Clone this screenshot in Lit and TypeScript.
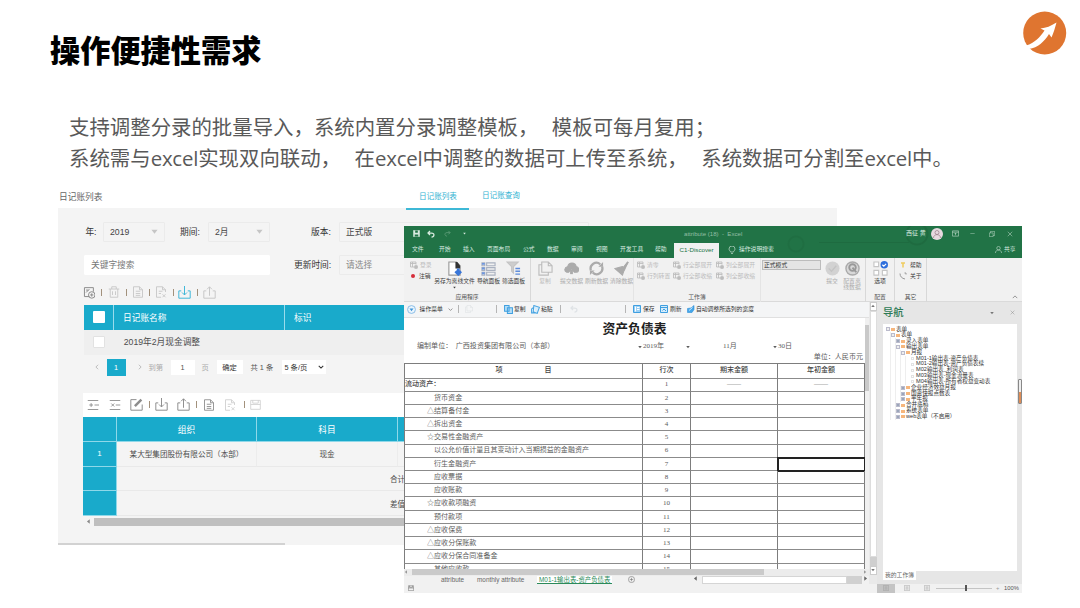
import { LitElement, html, css, svg, nothing } from "lit";
import { customElement } from "lit/decorators.js";

const glyphs: Record<string, any> = {
  addDoc: svg`<path d="M9 13H3V2h11v5M5 5h3M5 8l4-4"/><circle cx="12" cy="11" r="4"/><path d="M12 9v4M10 11h4"/>`,
  trash: svg`<path d="M1 4h14M5 4V1h6v3M3 4v11h10V4M6 7v5M10 7v5"/>`,
  doc: svg`<path d="M2 15V1h8l4 4v10zM10 1v4h4M5 7h6M5 10h6M5 12.500h6"/>`,
  docX: svg`<path d="M14 8V5l-4-4H2v14h6M10 1v4h4M5 7h5M5 10h3M10 11l4 4M14 11l-4 4"/>`,
  download: svg`<path d="M4 6H1v9h14V6h-3M8 0v11M5 8l3 3 3-3"/>`,
  upload: svg`<path d="M4 6H1v9h14V6h-3M8 12V1M5 4l3-3 3 3"/>`,
  insRow: svg`<path d="M1 2h14M1 14h14M3 8h5M5.500 5.500v5M10 8h6"/>`,
  delRow: svg`<path d="M1 2h14M1 14h14M3 6l4 4M7 6l-4 4M9 8h6"/>`,
  edit: svg`<path d="M8 2H1v13h14V8"/><path stroke-width="3" d="M6 10l8-8"/>`,
  save: svg`<path d="M1 2h14v13H1zM4 2v4h8V2M1 8h14"/>`,
  disk: svg`<path fill="currentColor" d="M1 1h14v14H1z"/><path fill="#217346" stroke="none" d="M5 1h6v5H5zM4 10h8v5H4z"/>`,
  undo: svg`<path stroke-width="2.500" d="M2 6h7c7 0 6 8 0 8M6 2L2 6l4 4"/>`,
  redo: svg`<path stroke-width="2" d="M14 6H7c-7 0-6 8 0 8M10 2l4 4-4 4"/>`,
  bulb: svg`<path d="M5 12c0-2-3-3-3-6a6 6 0 0 1 12 0c0 3-3 4-3 6zM6 15h4"/>`,
  person: svg`<circle cx="8" cy="5" r="4"/><path d="M1 16c0-9 14-9 14 0"/>`,
  ribbonOpt: svg`<path d="M1 2h14v12H1zM1 5h14M8 12V7M6 9l2-2 2 2"/>`,
  restore: svg`<path d="M1 5h10v10H1zM4 5V1h11v11h-4"/>`,
  close: svg`<path d="M2 2l12 12M14 2L2 14"/>`,
  minimize: svg`<path d="M1 8h14"/>`,
  saveAs: svg`<path fill="#fff" stroke="#999" d="M2 1h8l4 4v10H2z"/><path fill="#333" stroke="none" d="M9 1h2l3 4v3H9z"/><path stroke="#3976d8" stroke-width="3" d="M12 8v6M9 11l3 3 3-3"/>`,
  navPanel: svg`<path stroke="#a9b1c0" d="M1 2h3v3H1zM1 7h3v3H1zM1 12h3v3H1zM6 2h9v3H6zM6 7h9v3H6zM6 12h9v3H6z"/><path stroke="#6f97de" stroke-width="2" d="M1 3h3M1 8h3M1 13h3"/>`,
  filter: svg`<path fill="#cdcdcd" stroke="#c4c4c4" d="M1 1h12L8 6v7l-2-2V6z"/><path stroke="#5f8ddb" stroke-width="1.500" d="M10 8h5M10 11h5M10 14h5"/>`,
  pages: svg`<path d="M4 1h7l4 4v7H4zM4 4H1v11h10v-3M11 1v4h4"/>`,
  cloud: svg`<path fill="currentColor" d="M3 12c-3-1-3-5 1-6 1-5 8-5 9 0 4 1 3 6 0 6h-2L8 8l-3 4z"/><path stroke-width="3" d="M8 9v5"/>`,
  refresh: svg`<path stroke-width="2.400" d="M2 10A6.200 6.200 0 0 1 12 3.500M14 6A6.200 6.200 0 0 1 4 12.500"/><path fill="currentColor" stroke="none" d="M10 6h5V1zM6 10H1v5z"/>`,
  broom: svg`<path fill="currentColor" d="M15 1L9 8l2 2zM9 6L1 8l8 7 2-6z"/><path stroke-width="2" d="M15 1l-5 7"/>`,
  gridArrow: svg`<path stroke-width="1.700" d="M8 12H1V2h11v5M1 5h11M5 2v10"/><circle cx="12" cy="12" r="3.500" fill="currentColor"/>`,
  disc: svg`<circle cx="8" cy="8" r="7.500" fill="#d2d2d2" stroke="none"/><path stroke="#c4c4c4" stroke-width="1.500" d="M4 8l3 3 5-6"/>`,
  discCfg: svg`<circle cx="8" cy="8" r="7" fill="#d8d8d8" stroke="#aaa" stroke-width="1.500"/><circle cx="8" cy="7" r="3.500" stroke="#999" stroke-width="2"/><path stroke="#999" stroke-width="2" d="M8 7l4 5"/>`,
  options: svg`<path stroke="#c5c5c5" fill="#fff" d="M1 1h5v5H1zM1 10h5v5H1zM10 10h5v5h-5z"/><circle cx="12" cy="4" r="4" fill="#2f6fdc" stroke="none"/><path stroke="#fff" d="M10 4l1.500 1.500L14 3"/>`,
  tip: svg`<path stroke="#f0cb5e" stroke-width="3" d="M4 4h8M8 4v9"/>`,
  about: svg`<path stroke="#999" stroke-width="2" d="M2 3c0 6 4 10 10 11M11 2h3v3"/>`,
  bubble: svg`<circle cx="8" cy="8" r="7" stroke="#7bb4e4" stroke-width="1.500" fill="#eaf5fd"/><path fill="#3d93d8" stroke="none" d="M8 11L4.500 6h7z"/>`,
  copyBlue: svg`<path fill="#b5ddf7" stroke="#3fa0e0" stroke-width="1.800" d="M1 1h8v10H1zM6 5h9v10H6z"/>`,
  pasteBlue: svg`<path fill="#d7edfb" stroke="#49a5e2" stroke-width="1.800" d="M5 1l10 3-4 11-7-3zM5 4L1 7v7h8"/>`,
  saveBlue: svg`<path fill="#9bd0f5" stroke="#3f9fe0" stroke-width="2" d="M1 1h14v14H1z"/><path stroke="#fff" stroke-width="2" d="M5 3v10M8 5h5M8 9h5"/>`,
  calcBlue: svg`<path fill="#d5ecfb" stroke="#3f9fe0" stroke-width="2" d="M1 1h14v14H1zM1 5h14M5 11l3-3 4 4"/>`,
  fitBlue: svg`<path fill="#45a7ea" stroke="#2d8fd8" d="M1 7l7-1 6-5v8l-4 6H1z"/><path stroke="#fff" stroke-width="1.500" d="M4 11l7-6"/>`,
  view: svg`<path d="M1 1h14v14H1zM4 5h8M4 8h8M4 11h8"/>`,
  plusCircle: svg`<circle cx="8" cy="8" r="7"/><path d="M8 4v8M4 8h8"/>`,
  chevUp: svg`<path stroke-width="2" d="M2 11l6-6 6 6"/>`,
  chevDown: svg`<path stroke-width="2.800" d="M2 5l6 6 6-6"/>`,
  chevLeft: svg`<path stroke-width="2" d="M11 2L5 8l6 6"/>`,
  chevRight: svg`<path stroke-width="2" d="M5 2l6 6-6 6"/>`,
  triDown: svg`<path fill="currentColor" stroke="none" d="M1 4h14L8 13z"/>`,
  triUp: svg`<path fill="currentColor" stroke="none" d="M1 12h14L8 3z"/>`,
  triLeft: svg`<path fill="currentColor" stroke="none" d="M12 1v14L3 8z"/>`,
  triRight: svg`<path fill="currentColor" stroke="none" d="M4 1v14l9-7z"/>`,
};

const icon = (name: string, size = 12, cls = "") => html`<svg class=${cls} width=${size} height=${size}
  viewBox="0 0 16 16" fill="none" stroke="currentColor" stroke-width="1.200">${glyphs[name]}</svg>`;

const base = css`
  * { box-sizing: border-box; }
  svg { display: block; flex: none; }
  div, span { white-space: nowrap; }
  .row { display: grid; align-items: center; justify-items: start; }
`;

@customElement("journal-panel")
class JournalPanel extends LitElement {
  static styles = [base, css`
    :host { display: block; width: 779px; font-size: 8.700px; color: #4c4c4c; }
    .head { display: grid; grid-template-columns: 348px 63px 60px; height: 19px; align-items: center; }
    .name { color: #666; height: 16px; line-height: 13px; padding-left: 1px; }
    .tab { height: 19px; line-height: 14px; padding-left: 13px; font-size: 7.600px; color: #32b3d2; }
    .tab.on { border-bottom: 2px solid #3db8d6; margin-bottom: -2px; height: 20px; }
    .panel { background: #f4f4f4; height: 337px; padding: 13.500px 0 0 25px; }
    .filters { display: grid; grid-template-columns: 20px 62px 15px 28px 62px 41px 28px 250px; height: 20px; align-items: center; color: #333; }
    .filters.second { grid-template-columns: 187px 24px 45px 250px; margin-top: 13px; }
    .field { height: 20px; border: 1px solid #ebebeb; display: flex; align-items: center; justify-content: space-between; padding: 0 6px; border-radius: 1px; color: #444; }
    .field svg { color: #c5c5c5; }
    .white { background: #fff; border-color: #fff; margin-left: 1px; color: #777; }
    .hint { color: #888; }
    .tools { grid-template-columns: 17px 8px 17px 7px 16px 7px 17px 6px 18px 7px 14px; height: 30.500px; padding-top: 5px; color: #c6c6c6; }
    .tools svg:first-child { margin-left: -1px; }
    .tools i, .tools2 i { width: 1px; height: 7px; background: #a2917c; }
    .tools i { margin-left: 1px; }
    .dark { color: #8b8b8b; }
    .blue { color: #3db6d8; }
    .thead { display: grid; grid-template-columns: 30px 171px 1fr; height: 25px; background: #19aacb; color: #fff; margin-left: 1px; }
    .thead div { display: flex; align-items: center; border-right: 1px solid #9adcec; padding: 0 0 1px 9px; }
    .box { width: 12px; height: 12px; background: #fff; border-radius: 1px; }
    .trow { grid-template-columns: 39px 1fr; height: 25px; background: #efefef; margin-left: 1px; padding-bottom: 2px; }
    .trow .box { margin-left: 9px; border: 1px solid #e2e2e2; }
    .pager { grid-template-columns: 13px 30px 12px 22px 31px 15px 34px 31px 60px; height: 25px; font-size: 7.300px; padding: 0 0 1px 10.500px; color: #aaa; }
    .pg { width: 19px; height: 17px; background: #19aacb; color: #fff; display: grid; place-items: center; }
    .inp { width: 24px; height: 15px; background: #fff; color: #555; display: grid; place-items: center; }
    .btn { width: 26px; height: 14px; background: #fff; color: #333; display: grid; place-items: center; }
    .total { color: #555; }
    .sel { width: 44px; height: 14px; background: #fff; color: #333; display: flex; align-items: center; justify-content: space-between; padding: 0 2px 0 3px; }
    .tools2 { grid-template-columns: 22px 21px 19px 6px 22px 19px 7px 21px 20px 6px 14px; height: 24px; margin-top: 13.200px; padding-left: 4px; background: #fff; color: #8d8d8d; padding-bottom: 1px; }
    .pale { color: #cfcfcf; }
    .grid { display: grid; grid-template-columns: 34px 140px 141px 1fr; grid-template-rows: repeat(4, 24.750px); font-size: 7.600px; }
    .grid div { display: grid; place-items: center; border-right: 1px solid #ececec; border-bottom: 1px solid #e9e9e9; }
    .grid .b { background: #19aacb; color: #fff; border-color: #8fd8e9; font-size: 8.700px; }
    .grid .n { font-size: 8px; }
    .grid .sum { grid-column: span 3; justify-items: start; padding-left: 273px; }
    .scroll { display: grid; grid-template-columns: 11px 1fr; align-items: center; margin-top: 1.500px; height: 8px; color: #888; }
    .scroll svg { margin-left: 3px; }
    .scroll div { height: 8px; background: #bfbfbf; }
    .foot { height: 2px; width: 227px; background: #d2d2d2; margin-top: -2px; }
  `];
  render() {
    const bar = html`<i></i>`;
    return html`
      <div class="head"><span class="name">日记账列表</span><span class="tab on">日记账列表</span><span class="tab">日记账查询</span></div>
      <div class="panel">
        <div class="filters"><span>&nbsp;年:</span><div class="field">2019${icon("triDown", 7)}</div><span></span><span>期间:</span><div class="field">2月${icon("triDown", 7)}</div><span></span><span>版本:</span><div class="field">正式版</div></div>
        <div class="filters second"><div class="field white">关键字搜索</div><span></span><span>更新时间:</span><div class="field hint">请选择</div></div>
        <div class="row tools">${icon("addDoc", 13, "dark")}${bar}${icon("trash")}${bar}${icon("doc")}${bar}${icon("docX")}${bar}${icon("download", 13, "blue")}${bar}${icon("upload", 13)}</div>
        <div class="thead"><div><span class="box"></span></div><div>日记账名称</div><div>标识</div></div>
        <div class="row trow"><span class="box"></span><span>&#8202;2019年2月现金调整</span></div>
        <div class="row pager">${icon("chevLeft", 6)}<span class="pg">1</span>${icon("chevRight", 6)}<span>到第</span><span class="inp">1</span><span>页</span><span class="btn">确定</span><span class="total">共 1 条</span><span class="sel">5 条/页${icon("chevDown", 6)}</span></div>
        <div class="row tools2">${icon("insRow")}${icon("delRow")}${icon("edit", 13)}${bar}${icon("download", 13)}${icon("upload", 13)}${bar}${icon("doc")}${icon("docX", 12, "pale")}${bar}${icon("save", 11, "pale")}</div>
        <div class="grid">
          <div class="b"></div><div class="b">组织</div><div class="b">科目</div><div class="b"></div>
          <div class="b n">1</div><div>某大型集团股份有限公司（本部）</div><div>现金</div><div></div>
          <div class="b"></div><div class="sum">合计</div>
          <div class="b"></div><div class="sum">差值</div>
        </div>
        <div class="scroll">${icon("triLeft", 5)}<div></div></div>
      </div>
      <div class="foot"></div>`;
  }
}

const items: [number, string][] = [
  [0, "流动资产："], [4, "货币资金"], [3, "△结算备付金"], [3, "△拆出资金"], [3, "☆交易性金融资产"],
  [4, "以公允价值计量且其变动计入当期损益的金融资产"], [4, "衍生金融资产"], [4, "应收票据"], [4, "应收账款"],
  [3, "☆应收款项融资"], [4, "预付款项"], [3, "△应收保费"], [3, "△应收分保账款"], [3, "△应收分保合同准备金"], [4, "其他应收款"],
];

const tree: [number, string, string][] = [
  [0, "-", "表单"], [1, "-", "表单"], [2, "+", "录入表单"], [2, "-", "输出表单"], [3, "-", "月报"],
  [4, "", "M01-1输出表-资产负债表"], [4, "", "M01-2输出表-资产负债表续"], [4, "", "M02输出表_利润表"],
  [4, "", "M03输出表-现金流量表"], [4, "", "M04输出表-所有者权益变动表"],
  [3, "+", "企业经济效益月报"], [3, "+", "国资快报点数表"], [3, "+", "半年报"],
  [2, "+", "合并底稿"], [2, "+", "系统表单"], [2, "+", "web表单（不启用）"],
];

@customElement("excel-window")
class ExcelWindow extends LitElement {
  static styles = [base, css`
    :host { display: block; width: 618px; height: 366.500px; font-size: 5.800px; color: #3c3c3c; background: #f1f1f1; overflow: hidden; line-height: 1.200; }
    .green { background: #217346; color: #d9ebe0; height: 31.500px; background-image: radial-gradient(circle at 513px 8px, transparent 9px, #1e6b40 10px 11px, transparent 12px), radial-gradient(circle at 392px 18px, transparent 6px, #1f6e42 7px 8px, transparent 9px), linear-gradient(#1e6b40, #1e6b40); background-size: auto, auto, 90px 1px; background-position: 0 0, 0 0, 415px 16px; background-repeat: no-repeat; }
    .title { grid-template-columns: 23px 17px 19px 221px 222px 25px 21px 18px 19px 18px 10px; height: 15.500px; font-size: 6px; }
    .title > :first-child { margin-left: 9px; }
    .faint { color: #5d9b78; }
    .mid { color: #93bfa5; font-size: 6.100px; }
    .avatar { width: 12px; height: 12px; border-radius: 50%; background: #e8d9e0; color: #8d6f7b; display: grid; place-items: center; }
    .tabs { grid-template-columns: 27px 24px 24px 36px 24px 24px 25px 24px 35px 19px 54px 11px 256px 9px 20px; height: 16px; padding-left: 8px; }
    .tabs .on { background: #f1f1f1; color: #217346; height: 15px; width: 45px; display: grid; place-items: center; align-self: end; font-size: 6.200px; }
    .ribbon { display: flex; height: 44px; border-bottom: 1px solid #dadada; }
    .group { border-right: 1px solid #d8d8d8; display: flex; flex-direction: column; height: 44px; padding-top: 2px; }
    .g1 { width: 127px; } .g2 { width: 103px; } .g3 { width: 127px; } .g4 { width: 105px; } .g5 { width: 29px; } .g6 { width: 32px; }
    .g2, .g3 { border-color: #e4e4e4; }
    .cells { display: grid; height: 34px; }
    .g1 .cells { grid-template-columns: 29px 43px 25px 25px; }
    .g2 .cells { grid-template-columns: 28px 25px 25px 25px; }
    .g3 .cells { grid-template-columns: 36px 43px 43px; padding-left: 3px; }
    .g4 .cells { grid-template-columns: 60px 20px 20px; padding-left: 1px; }
    .g5 .cells, .g6 .cells { grid-template-columns: 1fr; }
    .big { display: flex; flex-direction: column; align-items: center; text-align: center; padding-top: 1px; gap: 2px; }
    .stack { display: flex; flex-direction: column; }
    .line { display: flex; align-items: center; gap: 2px; height: 11px; }
    .g1 .line { padding-left: 6px; }
    .g6 .line { padding-left: 4px; gap: 3px; }
    .dot { width: 4px; height: 4px; border-radius: 50%; background: #d62e3a; margin: 0 2px 0 1px; }
    .off { color: #bcbcbc; }
    .soft { color: #ababab; }
    .cap { text-align: center; color: #555; height: 8px; line-height: 7px; }
    .combo { width: 59px; height: 10px; background: #e4e4e4; border: 1px solid #bcbcbc; padding-left: 1px; line-height: 8px; color: #333; }
    .fold { flex: 1; display: flex; justify-content: flex-end; align-items: flex-end; padding: 0 4px 1px; color: #777; }
    .body { display: grid; grid-template-columns: 465px 8px 145px; height: 282px; }
    .left { display: flex; flex-direction: column; min-width: 0; }
    .bar { grid-template-columns: 11px 30px 10px 7px 31px 8px 10px 17px 10px 19px 10px 55px 8px 10px 17px 10px 17px 9px 70px; height: 16px; padding-left: 3px; border-bottom: 1px solid #e0e0e0; background: #f4f5f6; color: #333; }
    .bar .drop { color: #888; }
    .bar .ghost { color: #dfe3e6; }
    .bar i { width: 1px; height: 8px; background: #b5b5b5; }
    .sheetbox { display: grid; grid-template-columns: 461px 4px; height: 251px; overflow: hidden; background: #fff; }
    .sheet { font-family: "Liberation Serif", "Noto Sans CJK SC", serif; font-size: 7.050px; color: #5d5d5d; overflow: hidden; }
    .h1 { font-size: 12.800px; font-weight: 700; color: #222; height: 22.500px; line-height: 23px; text-align: center; }
    .meta { grid-template-columns: 221px 5px 43px 37px 50px 5px 60px; height: 12px; padding: 1px 0 0 13px; }
    .unit { text-align: right; height: 10.500px; line-height: 10px; padding-right: 2px; }
    .tr { display: grid; grid-template-columns: 239px 48px 87px 87px; height: 13.230px; }
    .tr > div { border-right: 1px solid #7d7d7d; border-bottom: 1px solid #8b8b8b; display: flex; align-items: center; justify-content: center; }
    .tr > div:first-child { border-left: 1px solid #7d7d7d; justify-content: flex-start; }
    .tr.th { height: 16px; border-top: 1px solid #7d7d7d; font-weight: 500; color: #444; }
    .tr.th > div:first-child { justify-content: center; gap: 42px; }
    .tr.l3 > div:first-child { padding-left: 22px; }
    .tr.l4 > div:first-child { padding-left: 29px; }
    .tr.l0 > div:first-child { font-weight: 500; color: #444; }
    .tr .picked { outline: 2px solid #222; outline-offset: -1px; }
    .vs { background: #f0f0f0; padding-top: 7px; }
    .vs div { height: 66px; background: #c9c9c9; }
    .hs { display: grid; grid-template-columns: 8px 352px 1fr 6px; height: 7px; align-items: center; background: #ececec; color: #999; }
    .hs div { height: 6px; background: #cacaca; }
    .sheets { grid-template-columns: 37px 36px 60px 91px 65px 9px 145px 16px 6px; height: 8px; color: #666; font-size: 6.400px; line-height: 8px; align-items: start; }
    .sheets .cur { background: #fff; color: #2b8a5a; border-bottom: 1px solid #2b8a5a; padding: 0 2px; height: 8px; line-height: 7px; }
    .thumb { background: #fff; border: 1px solid #d5d5d5; width: 145px; height: 8px; }
    .gut { background: #d0d0d0; width: 15px; height: 8px; }
    .vscroll { display: grid; grid-template-rows: 9px 246px 9px 9px; background: #e9e9e9; justify-items: center; color: #777; }
    .vscroll > * { width: 7px; }
    .vbtn { background: #fff; border: 1px solid #ccc; display: grid; place-items: center; height: 9px; }
    .vtrack { background: #fff; border: 1px solid #ddd; }
    .vrest { background: #cfcfcf; }
    .nav { background: #e6e6e6; padding: 0 0 0 6px; position: relative; }
    .navhead { display: grid; grid-template-columns: 107px 20px 8px; align-items: center; height: 22px; color: #777; }
    .navhead b { font-size: 10.300px; font-weight: 500; color: #2d7a55; line-height: 22px; }
    .tree { background: #fff; width: 134px; height: 247.500px; padding: 3px 0 0 3px; font-size: 5.600px; color: #333; }
    .node { display: flex; align-items: center; height: 5.830px; line-height: 5.830px; }
    .tw { width: 4px; height: 4px; border: 1px solid #bbc; background: #eee; flex: none; }
    .tw.plus { background: #9aa6ba; }
    .fd { width: 4px; height: 3px; background: #f6b67c; margin: 0 1px; flex: none; }
    .leaf { width: 3px; height: 3px; border: 1px solid #e2e2e2; margin: 0 2px 0 5px; flex: none; }
    .ind { width: 5px; height: 100%; border-right: 1px solid #eee; flex: none; }
    .mine { display: inline-block; background: #fff; height: 9px; line-height: 8px; padding: 0 2px; width: 33px; color: #666; }
    .knob { position: absolute; left: 141px; top: 77px; width: 4px; height: 25px; border: 1px solid #888; background: linear-gradient(#eee 52%, #de8d57 52%); border-radius: 1px; }
    .status { grid-template-columns: 473px 27px 20px 12px 60px 8px 20px; height: 9px; background: #f1f1f1; color: #999; }
    .status > :first-child { margin-left: 4px; color: #555; }
    .on2 { background: #c4c4c4; width: 18px; height: 9px; display: grid; place-items: center; }
    .zoom { width: 56px; height: 1px; background: #c4c4c4; display: flex; justify-content: center; align-items: center; }
    .zoom span { width: 2px; height: 6px; background: #555; margin-left: 4px; flex: none; }
    .pct { color: #555; }
  `];
  big(name: string, label: any, size = 15, cls = "") {
    return html`<div class="big ${cls}">${icon(name, size)}<span>${label}</span></div>`;
  }
  line(name: string, label: string, cls = "") {
    return html`<div class="line ${cls}">${name === "dot" ? html`<span class="dot"></span>` : icon(name, 8)}<span>${label}</span></div>`;
  }
  render() {
    return html`
      <div class="green">
        <div class="row title">${icon("disk", 7)}${icon("undo", 8)}${icon("redo", 7, "faint")}${icon("triDown", 3)}<span class="mid">attribute (18)&nbsp; - &nbsp;Excel</span><span>西征 黄</span><span class="avatar">${icon("person", 8)}</span>${icon("ribbonOpt", 7)}${icon("minimize", 5)}${icon("restore", 6)}${icon("close", 6)}</div>
        <div class="row tabs">${["文件", "开始", "插入", "页面布局", "公式", "数据", "审阅", "视图", "开发工具", "帮助"].map((t) => html`<span>${t}</span>`)}<span class="on">C1-Discover</span>${icon("bulb", 8)}<span>操作说明搜索</span>${icon("person", 7)}<span>共享</span></div>
      </div>
      <div class="ribbon">
        <div class="group g1"><div class="cells">
          <div class="stack">${this.line("gridArrow", "登录", "off")}${this.line("dot", "注销")}</div>
          <div class="big">${icon("saveAs", 15)}<span>另存为离线文件</span>${icon("triDown", 3)}</div>${this.big("navPanel", "导航面板")}${this.big("filter", "筛选面板")}
        </div><div class="cap">应用程序</div></div>
        <div class="group g2"><div class="cells">${this.big("pages", "复制", 15, "off")}${this.big("cloud", "提交数据", 15, "soft")}${this.big("refresh", "刷新数据", 15, "soft")}${this.big("broom", "清除数据", 15, "soft")}</div></div>
        <div class="group g3"><div class="cells off">
          <div class="stack">${this.line("gridArrow", "清零")}${this.line("gridArrow", "行列转置")}</div>
          <div class="stack">${this.line("gridArrow", "行全部展开")}${this.line("gridArrow", "行全部收缩")}</div>
          <div class="stack">${this.line("gridArrow", "列全部展开")}${this.line("gridArrow", "列全部收缩")}</div>
        </div><div class="cap">工作簿</div></div>
        <div class="group g4"><div class="cells"><div class="combo">正式模式</div>${this.big("disc", "提交", 15, "soft")}${this.big("discCfg", html`配置离<br>线数据`, 15, "soft")}</div></div>
        <div class="group g5"><div class="cells">${this.big("options", "选项")}</div><div class="cap">配置</div></div>
        <div class="group g6"><div class="cells"><div class="stack">${this.line("tip", "帮助")}${this.line("about", "关于")}</div></div><div class="cap">其它</div></div>
        <div class="fold">${icon("chevUp", 6)}</div>
      </div>
      <div class="body">
        <div class="left">
          <div class="row bar">${icon("bubble", 9)}<span>&nbsp;操作菜单</span>${icon("chevDown", 5, "drop")}<i></i>${icon("copyBlue" === "copyBlue" ? "pages" : "pages", 8, "ghost")}<i></i>${icon("copyBlue", 9)}<span>复制</span>${icon("pasteBlue", 9)}<span>粘贴</span><i></i>${icon("undo", 8, "ghost")}<i></i>${icon("saveBlue", 8)}<span>保存</span>${icon("calcBlue", 8)}<span>刷新</span>${icon("fitBlue", 8)}<span>自动调整所选列的宽度</span></div>
          <div class="sheetbox"><div class="sheet">
            <div class="h1">资产负债表</div>
            <div class="row meta"><span>编制单位：&nbsp; 广西投资集团有限公司（本部）</span>${icon("triDown", 4)}<span>2019年</span>${icon("triDown", 4)}<span>11月</span>${icon("triDown", 4)}<span>30日</span></div>
            <div class="unit">单位：人民币元</div>
            <div class="tr th"><div><span>项</span><span>目</span></div><div>行次</div><div>期末金额</div><div>年初金额</div></div>
            ${items.map(([lv, t], i) => html`<div class="tr l${lv}"><div>${t}</div><div>${i + 1}</div><div>${i ? nothing : "——"}</div><div class=${i === 6 ? "picked" : ""}>${i ? nothing : "——"}</div></div>`)}
          </div><div class="vs"><div></div></div></div>
          <div class="hs">${icon("triLeft", 4)}<div></div><span></span>${icon("triRight", 4)}</div>
          <div class="row sheets"><span></span><span>attribute</span><span>monthly attribute</span><span class="cur">M01-1输出表-资产负债表</span>${icon("plusCircle", 7)}${icon("triLeft", 5)}<span class="thumb"></span><span class="gut"></span>${icon("triRight", 5)}</div>
        </div>
        <div class="vscroll"><div class="vbtn">${icon("triUp", 4)}</div><div class="vtrack"></div><div class="vrest"></div><div class="vbtn">${icon("triDown", 4)}</div></div>
        <div class="nav">
          <div class="navhead"><b>导航</b>${icon("triDown", 4)}${icon("close", 5)}</div>
          <div class="tree">${tree.map(([lv, s, t]) => html`<div class="node">${Array.from({ length: lv }, () => html`<span class="ind"></span>`)}${s ? html`<span class="tw ${s === "+" ? "plus" : ""}"></span><span class="fd"></span>` : html`<span class="leaf"></span>`}<span>${t}</span></div>`)}</div>
          <span class="mine">我的工作簿</span>
          <div class="knob"></div>
        </div>
      </div>
      <div class="row status">${icon("save", 6)}<span class="on2">${icon("view", 6)}</span>${icon("view", 6)}${icon("view", 6)}<span class="zoom"><span></span></span><span>+</span><span class="pct">100%</span></div>`;
  }
}

@customElement("app-root")
class AppRoot extends LitElement {
  static styles = [base, css`
    :host { display: block; position: relative; width: 1080px; height: 608px; overflow: hidden; background: #fff; font-family: "Open Sans", "Noto Sans CJK SC", sans-serif; }
    header { display: flex; justify-content: space-between; height: 112px; padding: 11px 13px 0 50px; }
    h1 { margin: 16px 0 0; font: 900 30.200px/44px "Noto Sans CJK SC", sans-serif; color: #000; }
    p { margin: 0 0 0 69px; height: 77px; font-size: 20.420px; line-height: 31px; color: #595959; white-space: nowrap; }
    .gap { display: inline-block; width: 13.500px; }
    .en { letter-spacing: -0.200px; }
    journal-panel { margin-left: 58px; font-family: "Liberation Sans", "Noto Sans CJK SC", sans-serif; }
    excel-window { position: absolute; left: 404px; top: 226px; font-family: "Liberation Sans", "Noto Sans CJK SC", sans-serif; }
  `];
  render() {
    return html`
      <header><h1>操作便捷性需求</h1>
        <svg width="44" height="44" viewBox="0 0 44 44"><circle cx="21.700" cy="22" r="21.500" fill="#df7530"/><path fill="#fff" d="M3 34.500C12 32 17 26 21.500 19.500L17.500 17.500C23 17 28 15 33.500 11.500C32 17 30.500 22 28.500 26.500L26 23C21 31 15 36.500 6 38z"/></svg>
      </header>
      <p>支持调整分录的批量导入，系统内置分录调整模板，<span class="gap"></span>模板可每月复用；<br>系统需与<span class="en">excel</span>实现双向联动，<span class="gap"></span>在<span class="en">excel</span>中调整的数据可上传至系统，<span class="gap"></span>系统数据可分割至<span class="en">excel</span>中。</p>
      <journal-panel></journal-panel>
      <excel-window></excel-window>`;
  }
}
